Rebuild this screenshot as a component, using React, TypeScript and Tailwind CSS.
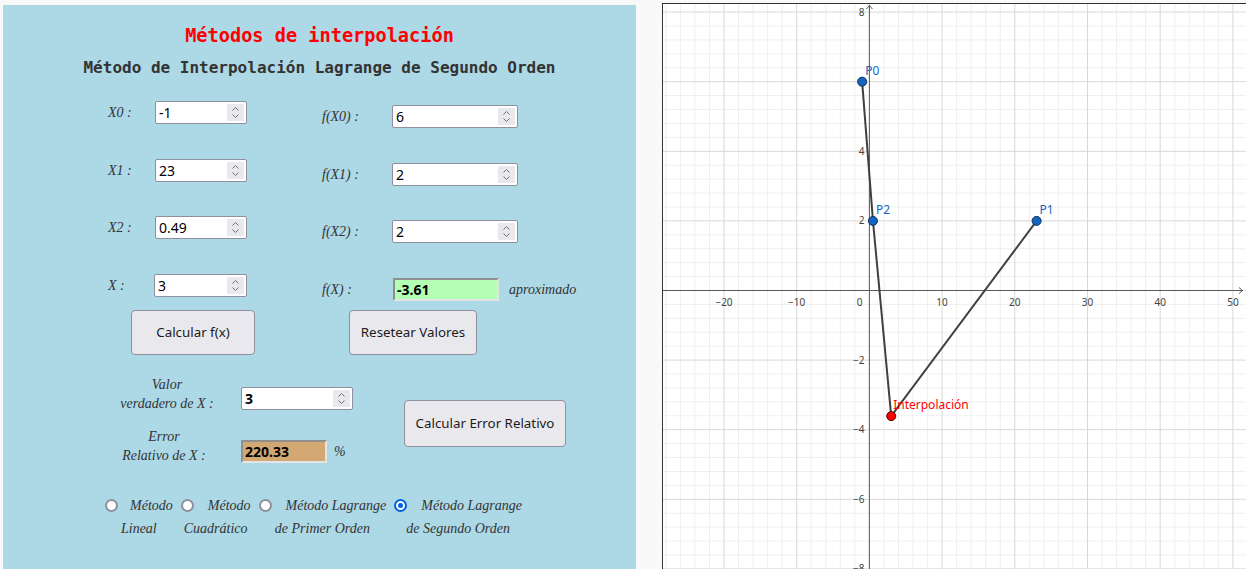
import React from "react";

const serifI = { fontFamily: '"Liberation Serif", "DejaVu Serif", serif', fontStyle: "italic" as const };
const sans = { fontFamily: '"Noto Sans", "Open Sans", sans-serif' };
const mono = { fontFamily: '"DejaVu Sans Mono", "Liberation Mono", monospace' };

function Spinner() {
  return (
    <div className="absolute right-[2px] top-[2px] bottom-[2px] w-[17px] bg-[#e9e9ed] flex items-center justify-center">
      <svg width="9" height="15" viewBox="0 0 9 15">
        <path d="M1.5 5.5 L4.5 2.5 L7.5 5.5" stroke="#70707a" strokeWidth="1" fill="none" />
        <path d="M1.5 9.5 L4.5 12.5 L7.5 9.5" stroke="#70707a" strokeWidth="1" fill="none" />
      </svg>
    </div>
  );
}

function NumInput({ value, className, bold }: { value: string; className: string; bold?: boolean }) {
  return (
    <div
      className={"relative h-[23px] bg-white border border-[#8f8f9d] rounded-[2px] flex items-center pl-[3px] text-[14px] text-black shrink-0 " + className + (bold ? " font-bold" : "")}
      style={sans}
    >
      {value}
      <Spinner />
    </div>
  );
}

function OutField({ value, className }: { value: string; className: string }) {
  return (
    <div
      className={"h-[23px] border-2 border-t-[#8f8f8f] border-l-[#8f8f8f] border-b-[#e4e4e4] border-r-[#e4e4e4] flex items-center pl-[2px] text-[14px] font-bold text-black shrink-0 " + className}
      style={sans}
    >
      {value}
    </div>
  );
}

function Label({ children, className }: { children: React.ReactNode; className: string }) {
  return (
    <div className={"text-[14px] text-[#333] shrink-0 " + className} style={serifI}>
      {children}
    </div>
  );
}

function Btn({ children, className }: { children: React.ReactNode; className: string }) {
  return (
    <div
      className={"bg-[#e9e9ed] border border-[#8f8f9d] rounded-[4px] flex items-center justify-center text-[13.33px] text-[#1b1b1b] shrink-0 " + className}
      style={sans}
    >
      {children}
    </div>
  );
}

function Radio({ checked }: { checked?: boolean }) {
  return checked ? (
    <div className="w-[13px] h-[13px] rounded-full border-2 border-[#0060df] bg-white flex items-center justify-center shrink-0">
      <div className="w-[5px] h-[5px] rounded-full bg-[#0060df]" />
    </div>
  ) : (
    <div className="w-[13px] h-[13px] rounded-full border-2 border-[#8f8f9d] bg-white shrink-0" />
  );
}

function RadioItem({ l1, l2, checked, gap }: { l1: string; l2: string; checked?: boolean; gap: string }) {
  return (
    <div className="flex flex-col items-center text-[14px] leading-[23px] text-[#333]" style={serifI}>
      <div className="flex items-center">
        <Radio checked={checked} />
        <span className={gap}>{l1}</span>
      </div>
      <div>{l2}</div>
    </div>
  );
}

function Graph() {
  const W = 590;
  const H = 566;
  const ox = 206.4;
  const oy = 286.5;
  const sx = 7.27;
  const sy = 34.8;
  const X = (v: number) => ox + v * sx;
  const Y = (v: number) => oy - v * sy;
  const minorX: number[] = [];
  const majorX: number[] = [];
  for (let i = -30; i <= 54; i += 2) {
    if (i % 10 === 0) majorX.push(i);
    else minorX.push(i);
  }
  const minorY: number[] = [];
  const majorY: number[] = [];
  for (let i = -25; i <= 25; i++) {
    if (i % 5 === 0) majorY.push(i * 0.4);
    else minorY.push(i * 0.4);
  }
  const p0 = [X(-1), Y(6)];
  const p1 = [X(23), Y(2)];
  const p2 = [X(0.49), Y(2)];
  const pi = [X(3), Y(-3.61)];
  const font = '"Noto Sans", "Open Sans", sans-serif';
  return (
    <svg width={W} height={H} className="block">
      <rect x="0" y="0" width={W} height={H} fill="#ffffff" />
      {minorX.map((v) => (
        <line key={"mx" + v} x1={X(v)} x2={X(v)} y1={0} y2={H} stroke="#efefef" strokeWidth="1" />
      ))}
      {minorY.map((v) => (
        <line key={"my" + v} y1={Y(v)} y2={Y(v)} x1={0} x2={W} stroke="#efefef" strokeWidth="1" />
      ))}
      {majorX.map((v) => (
        <line key={"Mx" + v} x1={X(v)} x2={X(v)} y1={0} y2={H} stroke="#d8d8d8" strokeWidth="1" />
      ))}
      {majorY.map((v) => (
        <line key={"My" + v} y1={Y(v)} y2={Y(v)} x1={0} x2={W} stroke="#d8d8d8" strokeWidth="1" />
      ))}
      <line x1={ox} x2={ox} y1={1} y2={H} stroke="#5a5a5a" strokeWidth="1" />
      <line x1={0} x2={580} y1={oy} y2={oy} stroke="#5a5a5a" strokeWidth="1" />
      <path d={`M${ox - 3} ${5} L${ox} ${1.5} L${ox + 3} ${5}`} stroke="#5a5a5a" fill="none" />
      <path d={`M576 ${oy - 3} L579.5 ${oy} L576 ${oy + 3}`} stroke="#5a5a5a" fill="none" />
      {[-20, -10, 10, 20, 30, 40, 50].map((v) => (
        <text key={"tx" + v} x={X(v)} y={oy + 15} fontSize="10" fill="#444" textAnchor="middle" fontFamily={font}>
          {v < 0 ? "\u2212" + Math.abs(v) : v}
        </text>
      ))}
      <text x={ox - 7} y={oy + 15} fontSize="10" fill="#444" textAnchor="end" fontFamily={font}>0</text>
      {[8, 4, 2, -2, -4, -6, -8].map((v) => (
        <text key={"ty" + v} x={ox - 5} y={Y(v) + 3.5} fontSize="10" fill="#444" textAnchor="end" fontFamily={font}>
          {v < 0 ? "\u2212" + Math.abs(v) : v}
        </text>
      ))}
      <polyline
        points={`${p0[0]},${p0[1]} ${p2[0]},${p2[1]} ${pi[0]},${pi[1]} ${p1[0]},${p1[1]}`}
        stroke="#404040"
        strokeWidth="2"
        fill="none"
      />
      {[
        [p0, "P0"],
        [p1, "P1"],
        [p2, "P2"],
      ].map(([p, n]) => (
        <g key={n as string}>
          <circle cx={(p as number[])[0]} cy={(p as number[])[1]} r="4.5" fill="#1565c0" stroke="#0a2f5c" strokeWidth="1" />
          <text x={(p as number[])[0] + 3} y={(p as number[])[1] - 7} fontSize="12" fill="#1565c0" fontFamily={font}>
            {n as string}
          </text>
        </g>
      ))}
      <circle cx={pi[0]} cy={pi[1]} r="4.5" fill="#ff0000" stroke="#4a0000" strokeWidth="1" />
      <text x={pi[0] + 2} y={pi[1] - 7} fontSize="12" fill="#ff0000" fontFamily={font}>
        Interpolación
      </text>
    </svg>
  );
}

export default function App() {
  return (
    <div className="w-[1246px] h-[569px] overflow-hidden bg-[#f9f9f9] flex items-start">
      {/* Left panel */}
      <div className="ml-[3px] mt-[5px] w-[633px] h-[570px] bg-[#add8e6] flex flex-col shrink-0">
        <div className="mt-[20px] text-center text-[18.6px] leading-[22px] font-bold text-[#ff0000]" style={mono}>
          Métodos de interpolación
        </div>
        <div className="mt-[11px] text-center text-[16px] leading-[20px] font-bold text-[#333]" style={mono}>
          Método de Interpolación Lagrange de Segundo Orden
        </div>

        {/* Rows */}
        <div className="mt-[23px] flex flex-col pl-[105px]">
          <div className="h-[58px] flex items-start">
            <div className="flex items-center">
              <Label className="w-[47px]">X0 :</Label>
              <NumInput value="-1" className="w-[92px]" />
            </div>
            <div className="flex items-center mt-[4px] ml-[75px]">
              <Label className="w-[70px]">f(X0) :</Label>
              <NumInput value="6" className="w-[126px]" />
            </div>
          </div>
          <div className="h-[57px] flex items-start">
            <div className="flex items-center">
              <Label className="w-[47px]">X1 :</Label>
              <NumInput value="23" className="w-[92px]" />
            </div>
            <div className="flex items-center mt-[4px] ml-[75px]">
              <Label className="w-[70px]">f(X1) :</Label>
              <NumInput value="2" className="w-[126px]" />
            </div>
          </div>
          <div className="h-[58px] flex items-start">
            <div className="flex items-center">
              <Label className="w-[47px]">X2 :</Label>
              <NumInput value="0.49" className="w-[92px]" />
            </div>
            <div className="flex items-center mt-[4px] ml-[75px]">
              <Label className="w-[70px]">f(X2) :</Label>
              <NumInput value="2" className="w-[126px]" />
            </div>
          </div>
          <div className="h-[27px] flex items-start">
            <div className="flex items-center">
              <Label className="w-[46px]">X :</Label>
              <NumInput value="3" className="w-[93px]" />
            </div>
            <div className="flex items-center mt-[4px] ml-[75px]">
              <Label className="w-[71px]">f(X) :</Label>
              <OutField value="-3.61" className="w-[106px] bg-[#b3ffb3]" />
              <Label className="ml-[10px]">aproximado</Label>
            </div>
          </div>
        </div>

        {/* Buttons */}
        <div className="mt-[9px] flex pl-[128px]">
          <Btn className="w-[124px] h-[45px]">Calcular f(x)</Btn>
          <Btn className="ml-[94px] w-[128px] h-[45px]">Resetear Valores</Btn>
        </div>

        {/* Error section */}
        <div className="mt-[20px] flex items-start pl-[109px]">
          <div className="flex flex-col">
            <div className="flex items-start">
              <Label className="w-[110px] text-center leading-[19px]">
                Valor
                <br />
                verdadero de X :
              </Label>
              <NumInput value="3" bold className="ml-[19px] mt-[12px] w-[112px]" />
            </div>
            <div className="mt-[14px] flex items-start">
              <Label className="w-[110px] pr-[6px] text-center leading-[19px]">
                Error
                <br />
                Relativo de X :
              </Label>
              <OutField value="220.33" className="ml-[19px] mt-[13px] w-[86px] bg-[#d3a872]" />
              <Label className="ml-[7px] mt-[14px]">%</Label>
            </div>
          </div>
          <Btn className="ml-[51px] mt-[25px] w-[162px] h-[47px]">Calcular Error Relativo</Btn>
        </div>

        {/* Radios */}
        <div className="mt-[29px] flex items-start pl-[102px] gap-[8px]">
          <RadioItem l1="Método" l2="Lineal" gap="ml-[12px]" />
          <RadioItem l1="Método" l2="Cuadrático" gap="ml-[14px]" />
          <RadioItem l1="Método Lagrange" l2="de Primer Orden" gap="ml-[14px]" />
          <RadioItem l1="Método Lagrange" l2="de Segundo Orden" checked gap="ml-[14px]" />
        </div>
      </div>

      {/* Graph */}
      <div className="ml-[26px] mt-[3px] border-l border-t border-[#333] shrink-0 overflow-hidden">
        <Graph />
      </div>
    </div>
  );
}
